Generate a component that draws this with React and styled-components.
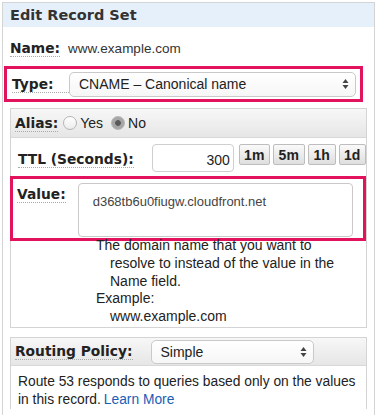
import React from 'react'
import styled, { createGlobalStyle } from 'styled-components'

const GlobalStyle = createGlobalStyle`
    body {
        margin: 0;
        background: #fff;
        font-family: "Liberation Sans", Arial, sans-serif;
        color: #222;
    }
`

const Page = styled.div`
    padding: 2px 0 0 2px;
    width: 381px;
    height: 415px;
    box-sizing: border-box;
    overflow: hidden;
`

const Panel = styled.div`
    width: 373px;
    height: 420px;
    box-sizing: border-box;
    border: 1px solid #d4d4d4;
    border-bottom: none;
`

const PanelHeader = styled.div`
    height: 24px;
    background: #e6f0fb;
    padding-left: 7px;
    display: flex;
    align-items: center;
    font-family: "DejaVu Sans", Verdana, sans-serif;
    font-weight: bold;
    font-size: 14.5px;
    color: #333;
`

const Label = styled.span`
    font-family: "DejaVu Sans", Verdana, sans-serif;
    font-weight: bold;
    font-size: 13.8px;
    color: #222;
    border-bottom: 1px dotted #aaa;
    line-height: 16px;
    width: ${props => props.width || 'auto'};
    flex-shrink: 0;
`

const NameRow = styled.div`
    display: flex;
    align-items: center;
    height: 36px;
    padding: 3px 0 0 7px;
    gap: 8px;
`

const NameValue = styled.span`
    font-size: 13.5px;
    color: #333;
`

const Highlight = styled.div`
    border: 3px solid #e2125d;
    margin-left: ${props => props.left}px;
    width: ${props => props.w}px;
    height: ${props => props.h}px;
    box-sizing: border-box;
    display: flex;
    align-items: ${props => props.align || 'center'};
    padding: ${props => props.pad || '0'};
`

const Select = styled.div`
    box-sizing: border-box;
    width: ${props => props.w}px;
    height: ${props => props.h}px;
    margin-left: ${props => props.left}px;
    border: 1px solid #c9c9c9;
    border-radius: 5px;
    background: linear-gradient(#ffffff, #f6f6f6);
    display: flex;
    align-items: center;
    justify-content: space-between;
    padding: 0 6px 0 9px;
    font-size: 14px;
    color: #222;
`

const Arrows = () => (
    <svg width="7" height="12" viewBox="0 0 7 12">
        <path d="M3.5 1 L6.5 5 L0.5 5 Z" fill="#444" />
        <path d="M3.5 11 L6.5 7 L0.5 7 Z" fill="#444" />
    </svg>
)

const Section = styled.div`
    margin-left: 7px;
    width: 357px;
    box-sizing: border-box;
    border: 1px solid #d4d4d4;
    border-bottom: ${props => props.open ? 'none' : '1px solid #d4d4d4'};
    margin-top: ${props => props.top}px;
    height: ${props => props.h ? props.h + 'px' : 'auto'};
`

const SectionHeader = styled.div`
    height: ${props => props.h}px;
    box-sizing: border-box;
    background: linear-gradient(#f7f7f7, #e6e6e6);
    border-bottom: 1px solid #d8d8d8;
    display: flex;
    align-items: center;
    padding-left: 4px;
`

const RadioGroup = styled.label`
    display: flex;
    align-items: center;
    font-size: 14px;
    color: #222;
    margin-left: ${props => props.left}px;
`

const Radio = styled.span`
    width: 14px;
    height: 14px;
    box-sizing: border-box;
    border-radius: 50%;
    border: 1px solid #b5b5b5;
    background: ${props => props.checked ? 'radial-gradient(circle, #5a5a5a 0 2.5px, #a6a6a6 3.2px)' : 'linear-gradient(#fff, #ececec)'};
    margin-right: 3px;
`

const TtlRow = styled.div`
    display: flex;
    align-items: flex-start;
    padding: 6px 0 0 7px;
    height: 32px;
`

const TtlLabel = styled(Label)`
    margin-top: 7px;
`

const TtlInput = styled.div`
    margin-left: 18px;
    width: 82px;
    height: 28px;
    box-sizing: border-box;
    border: 1px solid #cfcfcf;
    border-radius: 4px;
    text-align: right;
    padding: 7px 3px 0 0;
    font-size: 14px;
    color: #222;
`

const Quick = styled.button`
    margin-left: ${props => props.gap}px;
    width: ${props => props.w}px;
    height: 21px;
    padding: 0;
    border: 1px solid #bdbdbd;
    border-radius: 2px;
    background: linear-gradient(#fafafa, #dedede);
    font-family: "Liberation Sans", Arial, sans-serif;
    font-size: 14px;
    font-weight: bold;
    color: #222;
`

const ValueLabel = styled(Label)`
    margin: 3px 0 0 4px;
`

const TextArea = styled.div`
    margin-left: 12px;
    width: 275px;
    height: 54px;
    box-sizing: border-box;
    border: 1px solid #c9c9c9;
    border-radius: 4px;
    padding: 10px 0 0 14px;
    font-size: 13px;
    color: #444;
`

const Help = styled.div`
    margin-top: -4px;
    padding-left: 85px;
    font-size: 14px;
    line-height: 17.8px;
    color: #222;
`

const Indent = styled.div`
    padding-left: 14px;
`

const Body = styled.div`
    padding: 7px 0 0 7px;
    font-size: 13.8px;
    line-height: 18px;
    color: #222;
`

const Link = styled.a`
    color: #1a5db6;
    text-decoration: none;
    margin-left: 3px;
`

const App = () => {
  return (
   <Page>
    <GlobalStyle/>
    <Panel>
        <PanelHeader>Edit Record Set</PanelHeader>
        <NameRow>
            <Label>Name:</Label>
            <NameValue>www.example.com</NameValue>
        </NameRow>
        <Highlight left={1} w={359} h={36} pad="0 0 0 5px">
            <Label width="57px">Type:</Label>
            <Select w={287} h={25} left={0}>
                CNAME – Canonical name
                <Arrows/>
            </Select>
        </Highlight>
        <Section top={6} h={220}>
            <SectionHeader h={29}>
                <Label>Alias:</Label>
                <RadioGroup left={5}><Radio/>Yes</RadioGroup>
                <RadioGroup left={8}><Radio checked/>No</RadioGroup>
            </SectionHeader>
            <TtlRow>
                <TtlLabel>TTL (Seconds):</TtlLabel>
                <TtlInput>300</TtlInput>
                <Quick gap={5} w={31}>1m</Quick>
                <Quick gap={3} w={32}>5m</Quick>
                <Quick gap={3} w={28}>1h</Quick>
                <Quick gap={3} w={27}>1d</Quick>
            </TtlRow>
            <Highlight left={-1} w={356} h={65} align="flex-start" pad="4px 0 0 0">
                <ValueLabel>Value:</ValueLabel>
                <TextArea>d368tb6u0fiugw.cloudfront.net</TextArea>
            </Highlight>
            <Help>
                The domain name that you want to
                <Indent>resolve to instead of the value in the</Indent>
                <Indent>Name field.</Indent>
                Example:
                <Indent>www.example.com</Indent>
            </Help>
        </Section>
        <Section top={9} open>
            <SectionHeader h={28}>
                <Label>Routing Policy:</Label>
                <Select w={163} h={24} left={18}>
                    Simple
                    <Arrows/>
                </Select>
            </SectionHeader>
            <Body>
                Route 53 responds to queries based only on the values
                <br/>
                in this record.<Link href="#">Learn More</Link>
            </Body>
        </Section>
    </Panel>
   </Page>
  )
}

export default App
